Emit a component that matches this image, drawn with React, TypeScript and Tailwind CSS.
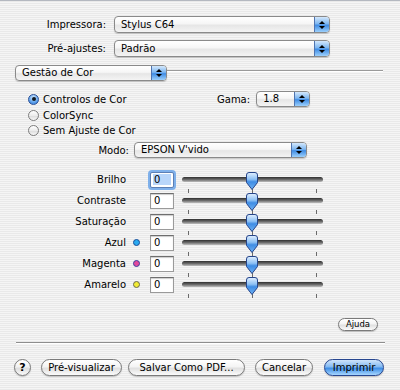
import React from "react";

function Arrows() {
  return (
    <span className="w-[15px] flex flex-col items-center justify-center gap-[2px] border-l border-[#4f74b0] rounded-r-[3px] bg-[linear-gradient(#d4e8fc,#7db6f0_45%,#3f8ce4_55%,#9cd0fc)]">
      <span className="w-0 h-0 border-x-[3px] border-x-transparent border-b-[3px] border-b-black" />
      <span className="w-0 h-0 border-x-[3px] border-x-transparent border-t-[3px] border-t-black" />
    </span>
  );
}

function Popup({ text, className }: { text: string; className: string }) {
  return (
    <div
      className={`flex items-stretch rounded-[4px] border border-[#8a8a8a] bg-[linear-gradient(#ffffff,#f6f6f6_45%,#e6e6e6_55%,#f4f4f4)] shadow-[0_1px_1px_rgba(0,0,0,0.18)] ${className}`}
    >
      <span className="flex-1 flex items-center pl-[6px] leading-none">{text}</span>
      <Arrows />
    </div>
  );
}

function Radio({ on }: { on?: boolean }) {
  if (on)
    return (
      <span className="w-[11px] h-[11px] rounded-full border border-[#2a4f96] bg-[radial-gradient(circle_at_50%_30%,#d8ecff,#5ea2ec_60%,#2c74d4)] flex items-center justify-center">
        <span className="w-[4px] h-[4px] rounded-full bg-[#101820]" />
      </span>
    );
  return (
    <span className="w-[11px] h-[11px] rounded-full border border-[#7c7c7c] bg-[linear-gradient(#ffffff,#ececec_50%,#dcdcdc_55%,#f8f8f8)]" />
  );
}

function Button({ text, className, primary }: { text: string; className: string; primary?: boolean }) {
  const look = primary
    ? "border-[#27468f] bg-[linear-gradient(#cfe4fb,#84baf2_45%,#3f8ee6_55%,#a6d6ff)]"
    : "border-[#7a7a7a] bg-[linear-gradient(#ffffff,#f4f4f4_45%,#e0e0e0_55%,#fbfbfb)]";
  return (
    <div
      className={`flex items-center justify-center rounded-full border shadow-[0_1px_1px_rgba(0,0,0,0.2)] leading-none ${look} ${className}`}
    >
      {text}
    </div>
  );
}

function Thumb() {
  return (
    <svg width="14" height="19" viewBox="0 0 14 19" className="absolute left-[63px] top-[3px]">
      <defs>
        <linearGradient id="tg" x1="0" y1="0" x2="0" y2="1">
          <stop offset="0" stopColor="#e2f0ff" />
          <stop offset="0.4" stopColor="#8cc0f4" />
          <stop offset="0.55" stopColor="#3e8ce4" />
          <stop offset="1" stopColor="#6fb2f4" />
        </linearGradient>
      </defs>
      <path
        d="M1.5 3 Q1.5 0.5 4 0.5 H10 Q12.5 0.5 12.5 3 V10.5 L7 17.5 L1.5 10.5 Z"
        fill="url(#tg)"
        stroke="#26458a"
        strokeWidth="1"
      />
    </svg>
  );
}

const rows = [
  { label: "Brilho", focus: true },
  { label: "Contraste" },
  { label: "Saturação" },
  { label: "Azul", dot: "bg-[#2aaaf0] border-[#1b4f9a]" },
  { label: "Magenta", dot: "bg-[#e2489c] border-[#3a3fa0]" },
  { label: "Amarelo", dot: "bg-[#f2ec34] border-[#6a6a50]" },
];

export default function App() {
  return (
    <div className="w-[400px] h-[390px] overflow-hidden flex flex-col text-[10px] text-black font-['Lucida_Grande','DejaVu_Sans',sans-serif] bg-[image:repeating-linear-gradient(180deg,#e9e9e9_0px,#e9e9e9_1px,#f5f5f5_1px,#f5f5f5_2px)] border-t border-[#b4b8c0]">
      {/* Printer */}
      <div className="mt-[15px] h-[17px] flex items-center">
        <span className="w-[106px] text-right">Impressora:</span>
        <Popup text="Stylus C64" className="ml-[8px] w-[216px] h-[17px]" />
      </div>
      <div className="mt-[7px] h-[17px] flex items-center">
        <span className="w-[106px] text-right">Pré-ajustes:</span>
        <Popup text="Padrão" className="ml-[8px] w-[216px] h-[17px]" />
      </div>

      {/* Section popup + group line */}
      <div className="mt-[8px] h-[16px] flex items-start pl-[15px] pr-[17px]">
        <Popup text="Gestão de Cor" className="w-[152px] h-[16px]" />
        <div className="flex-1 mt-[5px] h-[2px] border-t border-[#9a9a9a] bg-white" />
      </div>

      {/* Radios + gamma */}
      <div className="mt-[10px] h-[16px] flex items-center pl-[28px]">
        <div className="w-[189px] flex items-center gap-[4px]">
          <Radio on />
          <span>Controlos de Cor</span>
        </div>
        <span>Gama:</span>
        <Popup text="1.8" className="ml-[6px] w-[54px] h-[16px]" />
      </div>
      <div className="h-[16px] flex items-center pl-[28px] gap-[4px]">
        <Radio />
        <span>ColorSync</span>
      </div>
      <div className="h-[15px] flex items-center pl-[28px] gap-[4px]">
        <Radio />
        <span>Sem Ajuste de Cor</span>
      </div>

      {/* Mode */}
      <div className="mt-[4px] h-[16px] flex items-center">
        <span className="w-[129px] text-right">Modo:</span>
        <Popup text="EPSON V'vido" className="ml-[5px] w-[173px] h-[16px]" />
      </div>

      {/* Sliders */}
      <div className="mt-[11px] flex flex-col">
        {rows.map((r) => (
          <div key={r.label} className="h-[21px] flex items-center">
            <span className="w-[126px] text-right">{r.label}</span>
            <span className="w-[24px] flex items-center">
              {r.dot && <span className={`ml-[7px] w-[7px] h-[7px] rounded-full border ${r.dot}`} />}
            </span>
            {r.focus ? (
              <div className="w-[24px] h-[16px] rounded-[2px] shadow-[0_0_0_2px_#7fb0ea] border border-[#5d7fb4] bg-white flex items-center px-[2px]">
                <span className="h-[11px] flex-1 bg-[#b9d6fa] flex items-center leading-none pl-[1px]">0</span>
              </div>
            ) : (
              <div className="w-[24px] h-[16px] border border-[#9a9a9a] border-t-[#6e6e6e] bg-white shadow-[inset_0_1px_1px_rgba(0,0,0,0.2)] flex items-center pl-[3px] leading-none">
                0
              </div>
            )}
            <div className="relative ml-[8px] w-[141px] h-[21px]">
              <div className="absolute left-0 right-0 top-[8px] h-[5px] rounded-full bg-[linear-gradient(#2e2e2e,#6a6a6a_50%,#bdbdbd)]" />
              <div className="absolute left-[6px] top-[20px] w-px h-[4px] bg-[#6a6a6a]" />
              <div className="absolute left-[70px] top-[20px] w-px h-[4px] bg-[#6a6a6a]" />
              <div className="absolute left-[134px] top-[20px] w-px h-[4px] bg-[#6a6a6a]" />
              <Thumb />
            </div>
          </div>
        ))}
      </div>

      {/* Help */}
      <div className="mt-[23px] h-[13px] flex justify-end pr-[22px]">
        <Button text="Ajuda" className="w-[40px] h-[13px] text-[8.5px]" />
      </div>

      {/* Separator */}
      <div className="mt-[11px] ml-[16px] mr-[15px] h-[2px] border-t border-[#8e8e8e] bg-white" />

      {/* Bottom buttons */}
      <div className="mt-[15px] h-[17px] flex items-center">
        <div className="ml-[14px] w-[17px] h-[17px] rounded-full border border-[#7a7a7a] bg-[linear-gradient(#ffffff,#f2f2f2_45%,#dedede_55%,#fafafa)] shadow-[0_1px_1px_rgba(0,0,0,0.2)] flex items-center justify-center font-bold text-[11px] leading-none">
          ?
        </div>
        <Button text="Pré-visualizar" className="ml-[10px] w-[81px] h-[17px]" />
        <Button text="Salvar Como PDF..." className="ml-[6px] w-[117px] h-[17px]" />
        <Button text="Cancelar" className="ml-[10px] w-[58px] h-[17px]" />
        <Button text="Imprimir" primary className="ml-[11px] w-[60px] h-[17px]" />
      </div>
    </div>
  );
}
